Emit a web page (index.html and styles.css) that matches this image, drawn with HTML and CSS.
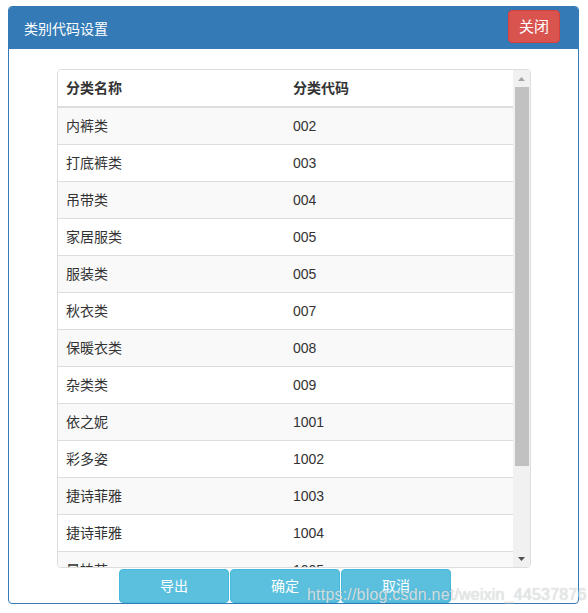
FILE: index.html
```html
<!DOCTYPE html>
<html lang="zh">
<head>
<meta charset="utf-8">
<title>类别代码设置</title>
<link rel="stylesheet" href="styles.css">
</head>
<body>
<div class="panel">
  <div class="panel-head">
    <span class="panel-title">类别代码设置</span>
    <button class="btn btn-danger">关闭</button>
  </div>
  <div class="panel-body">
    <div class="grid-box">
      <div class="grid">
        <div class="grid-row grid-head"><div class="cell">分类名称</div><div class="cell">分类代码</div></div>
        <div class="grid-row odd"><div class="cell">内裤类</div><div class="cell">002</div></div>
        <div class="grid-row"><div class="cell">打底裤类</div><div class="cell">003</div></div>
        <div class="grid-row odd"><div class="cell">吊带类</div><div class="cell">004</div></div>
        <div class="grid-row"><div class="cell">家居服类</div><div class="cell">005</div></div>
        <div class="grid-row odd"><div class="cell">服装类</div><div class="cell">005</div></div>
        <div class="grid-row"><div class="cell">秋衣类</div><div class="cell">007</div></div>
        <div class="grid-row odd"><div class="cell">保暖衣类</div><div class="cell">008</div></div>
        <div class="grid-row"><div class="cell">杂类类</div><div class="cell">009</div></div>
        <div class="grid-row odd"><div class="cell">依之妮</div><div class="cell">1001</div></div>
        <div class="grid-row"><div class="cell">彩多姿</div><div class="cell">1002</div></div>
        <div class="grid-row odd"><div class="cell">捷诗菲雅</div><div class="cell">1003</div></div>
        <div class="grid-row"><div class="cell">捷诗菲雅</div><div class="cell">1004</div></div>
        <div class="grid-row odd"><div class="cell">晨柏芝</div><div class="cell">1005</div></div>
      </div>
      <div class="scrollbar">
        <div class="sb-btn">
          <svg class="sb-arrow up" width="7" height="4" viewBox="0 0 7 4"><path d="M0 4 L3.5 0 L7 4 Z"/></svg>
        </div>
        <div class="sb-track"><div class="sb-thumb"></div></div>
        <div class="sb-btn">
          <svg class="sb-arrow down" width="7" height="4" viewBox="0 0 7 4"><path d="M0 0 L7 0 L3.5 4 Z"/></svg>
        </div>
      </div>
    </div>
    <div class="actions">
      <button class="btn btn-info">导出</button>
      <button class="btn btn-info">确定</button>
      <button class="btn btn-info">取消</button>
    </div>
  </div>
</div>
<div class="watermark">https://blog.csdn.net/weixin_44537876</div>
</body>
</html>
```
FILE: styles.css
```css
* { box-sizing: border-box; }
html, body { margin: 0; padding: 0; background: #fff; }
body {
  font-family: "Liberation Sans", "Noto Sans CJK SC", sans-serif;
  font-size: 14px;
  line-height: 20px;
  color: #333;
  width: 588px;
  height: 613px;
  overflow: hidden;
  position: relative;
}
.panel {
  margin: 6px 0 0 8px;
  width: 571px;
  height: 598px;
  border: 1px solid #337ab7;
  border-radius: 4px;
  overflow: hidden;
  background: #fff;
}
.panel-head {
  height: 42px;
  background: #337ab7;
  display: flex;
  justify-content: space-between;
  align-items: flex-start;
  padding: 0 18px 0 15px;
}
.panel-title {
  color: #fff;
  font-size: 14px;
  line-height: 20px;
  margin-top: 12px;
}
.btn {
  font-family: "Liberation Sans", "Noto Sans CJK SC", sans-serif;
  font-size: 14px;
  line-height: 20px;
  color: #fff;
  border-radius: 4px;
  padding: 0;
  margin: 0;
  cursor: pointer;
}
.btn-danger {
  margin-top: 3px;
  width: 52px;
  height: 33px;
  font-size: 15px;
  background: #d9534f;
  border: 1px solid #d43f3a;
}
.panel-body {
  padding-top: 20px;
}
.grid-box {
  margin-left: 48px;
  width: 474px;
  height: 499px;
  border: 1px solid #ddd;
  border-radius: 4px;
  display: flex;
  overflow: hidden;
}
.grid {
  width: 455px;
  height: 497px;
  overflow: hidden;
}
.grid-row {
  display: grid;
  grid-template-columns: 227px 1fr;
  border-top: 1px solid #ddd;
}
.grid-row.odd { background: #f9f9f9; }
.grid-head {
  border-top: none;
  border-bottom: 2px solid #ddd;
  font-weight: bold;
  background: #fff;
}
.grid-head + .grid-row { border-top: none; }
.cell {
  padding: 8px;
  height: 36px;
  line-height: 20px;
  white-space: nowrap;
}
.scrollbar {
  width: 17px;
  height: 497px;
  background: #f1f1f1;
  display: flex;
  flex-direction: column;
}
.sb-btn {
  height: 17px;
  display: flex;
  align-items: center;
  justify-content: center;
  flex: none;
}
.sb-arrow.up { fill: #a3a3a3; }
.sb-arrow.down { fill: #505050; }
.sb-track {
  flex: 1;
}
.sb-thumb {
  margin: 0 1px 0 2px;
  height: 379px;
  background: #c1c1c1;
}
.actions {
  margin: 1px 0 0 110px;
  display: flex;
  gap: 1px;
}
.btn-info {
  width: 110px;
  height: 34px;
  background: #5bc0de;
  border: 1px solid #46b8da;
}
.watermark {
  position: absolute;
  left: 307px;
  top: 587px;
  font-family: "Liberation Sans", Arial, sans-serif;
  font-size: 16px;
  line-height: 16px;
  letter-spacing: 0.2px;
  white-space: nowrap;
  color: rgba(236, 240, 242, 0.8);
  text-shadow: 0 0 1px rgba(110, 110, 110, 0.45);
}
```
